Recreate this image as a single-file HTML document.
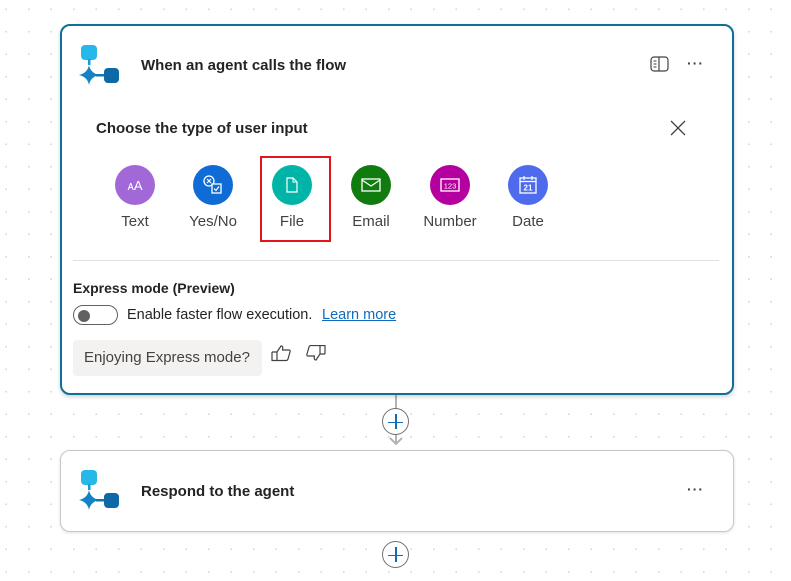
<!DOCTYPE html>
<html><head><style>
*{margin:0;padding:0;box-sizing:border-box}
body{width:791px;height:581px;overflow:hidden;position:relative;font-family:"Liberation Sans",sans-serif;color:#242424;
background-color:#fff;background-image:radial-gradient(circle,#d2d2d2 0.7px,transparent 1px);background-size:22.5px 22.5px;background-position:-5px -2px}
.card{position:absolute;left:60px;width:674px;background:#fff;border-radius:10px}
.c1{top:24px;height:371px;border:2px solid #0f6f94;box-shadow:0 2px 4px rgba(0,0,0,.18)}
.c2{top:450px;height:82px;border:1px solid #c8c8c8;box-shadow:0 1px 3px rgba(0,0,0,.12)}
.abs{position:absolute}
.title{font-size:15px;font-weight:bold;color:#242424}
.opt{position:absolute;top:165px;width:80px;text-align:center;font-size:15px;color:#424242}
.circ{width:40px;height:40px;border-radius:50%;margin:0 auto 8px;display:flex;align-items:center;justify-content:center}
.dots{position:absolute;font-size:14px;letter-spacing:1px;color:#424242;font-weight:bold}
.plus{position:absolute;width:27px;height:27px;border:1px solid #707070;border-radius:50%;background:#fff}
.plus:before{content:"";position:absolute;left:5px;top:12.5px;width:15px;height:1.5px;background:#0f6cbd}
.plus:after{content:"";position:absolute;left:12.3px;top:5px;width:1.5px;height:15px;background:#0f6cbd}
</style></head><body>
<div class="abs" style="left:395px;top:394px;width:2px;height:50px;background:#b3b3b3"></div>
<svg class="abs" style="left:389px;top:436px" width="14" height="10"><path d="M1 2 L7 8 L13 2" fill="none" stroke="#b3b3b3" stroke-width="2"/></svg>
<div class="plus" style="left:382px;top:408px"></div>
<div class="plus" style="left:382px;top:541px"></div>

<div class="card c1"></div>
<svg class="abs" style="left:78px;top:43px" width="44" height="44">
<rect x="3" y="2" width="16" height="15" rx="4" fill="#26b8e8"/>
<rect x="10" y="16" width="2.5" height="6" fill="#1c9ad6"/>
<path d="M11 22 Q12.5 30 21 32 Q12.5 34 11 42 Q9.5 34 1 32 Q9.5 30 11 22Z" fill="#1582c4"/>
<rect x="18" y="31" width="8" height="2.5" fill="#1276b8"/>
<rect x="26" y="25" width="15" height="15" rx="4" fill="#0d6aa6"/>
</svg>
<div class="abs title" style="left:141px;top:57px">When an agent calls the flow</div>
<svg class="abs" style="left:650px;top:56px" width="20" height="17"><rect x="1" y="1" width="17" height="14" rx="3" fill="none" stroke="#424242" stroke-width="1.2"/><line x1="9" y1="1" x2="9" y2="15" stroke="#424242" stroke-width="1.2"/><path d="M3.5 5h3M3.5 8h3M3.5 11h3" stroke="#424242"/></svg>
<div class="dots" style="left:687px;top:55px">···</div>
<div class="abs" style="left:96px;top:120px;font-size:15px;font-weight:bold;color:#242424">Choose the type of user input</div>
<svg class="abs" style="left:670px;top:120px" width="16" height="16"><path d="M1 1L15 15M15 1L1 15" stroke="#424242" stroke-width="1.3"/></svg>

<div class="opt" style="left:95px"><div class="circ" style="background:#a368d8"><span style="color:#fff;font-size:13px">ᴀA</span></div>Text</div>
<div class="opt" style="left:173px"><div class="circ" style="background:#0f6cd6"><svg width="22" height="22"><circle cx="7" cy="7" r="5" fill="none" stroke="#fff" stroke-width="1.3"/><path d="M5 5l4 4M9 5l-4 4" stroke="#fff" stroke-width="1.2"/><rect x="10" y="10" width="9" height="9" fill="#0f6cd6" stroke="#fff" stroke-width="1.3"/><path d="M12 14.5l2 2 3-4" fill="none" stroke="#fff" stroke-width="1.2"/></svg></div>Yes/No</div>
<div class="opt" style="left:252px"><div class="circ" style="background:#00b5a8"><svg width="14" height="16"><path d="M2 1h6l4 4v10H2Z" fill="none" stroke="#fff" stroke-width="1.2"/><path d="M8 1v4h4" fill="none" stroke="#fff" stroke-width="1"/></svg></div>File</div>
<div class="abs" style="left:260px;top:156px;width:71px;height:86px;border:2px solid #e3141b"></div>
<div class="opt" style="left:331px"><div class="circ" style="background:#107c10"><svg width="20" height="14"><rect x="1" y="1" width="18" height="12" fill="none" stroke="#fff" stroke-width="1.3"/><path d="M1 2l9 6 9-6" fill="none" stroke="#fff" stroke-width="1.2"/></svg></div>Email</div>
<div class="opt" style="left:410px"><div class="circ" style="background:#b4009e"><svg width="20" height="14"><rect x="1" y="1" width="18" height="12" fill="none" stroke="#fff" stroke-width="1.3"/><text x="10" y="10.5" font-size="7.5" fill="#fff" text-anchor="middle" font-family="Liberation Sans">123</text></svg></div>Number</div>
<div class="opt" style="left:488px"><div class="circ" style="background:#4f6bed"><svg width="20" height="20"><rect x="2" y="3" width="16" height="15" fill="none" stroke="#fff" stroke-width="1.3"/><line x1="2" y1="6.5" x2="18" y2="6.5" stroke="#fff" stroke-width="1.3"/><path d="M6 1v4M14 1v4" stroke="#fff" stroke-width="1.2"/><text x="10" y="15.5" font-size="8" font-weight="bold" fill="#fff" text-anchor="middle" font-family="Liberation Sans">21</text></svg></div>Date</div>

<div class="abs" style="left:73px;top:260px;width:646px;height:1px;background:#e0e0e0"></div>
<div class="abs" style="left:73px;top:280px;font-size:14px;font-weight:bold;color:#242424">Express mode (Preview)</div>
<div class="abs" style="left:73px;top:305px;width:45px;height:20px;border:1px solid #616161;border-radius:10px"><div style="position:absolute;left:4px;top:3.5px;width:12px;height:12px;border-radius:50%;background:#616161"></div></div>
<div class="abs" style="left:127px;top:307px;font-size:14.5px;color:#242424">Enable faster flow execution.</div>
<div class="abs" style="left:322px;top:307px;font-size:14.5px;color:#0f6cbd;text-decoration:underline">Learn more</div>
<div class="abs" style="left:73px;top:340px;width:189px;height:36px;background:#f3f2f1;border-radius:4px;font-size:15px;color:#424242;padding:9px 0 0 11px">Enjoying Express mode?</div>
<svg class="abs" style="left:270px;top:344px" width="22" height="18"><path d="M2 8h5l4-6c2 0 2 2 1.5 4H19c1 0 1.5 1 1 2l-2 7c-.3 1-1 1.5-2 1.5H7V8M2 8v8.5h5" fill="none" stroke="#424242" stroke-width="1.2" stroke-linejoin="round"/></svg>
<svg class="abs" style="left:305px;top:345px" width="22" height="18"><path d="M20 9h-5l-4 6c-2 0-2-2-1.5-4H3c-1 0-1.5-1-1-2l2-7c.3-1 1-1.5 2-1.5h9V9M20 9V.5h-5" fill="none" stroke="#424242" stroke-width="1.2" stroke-linejoin="round"/></svg>

<div class="card c2"></div>
<svg class="abs" style="left:78px;top:468px" width="44" height="44">
<rect x="3" y="2" width="16" height="15" rx="4" fill="#26b8e8"/>
<rect x="10" y="16" width="2.5" height="6" fill="#1c9ad6"/>
<path d="M11 22 Q12.5 30 21 32 Q12.5 34 11 42 Q9.5 34 1 32 Q9.5 30 11 22Z" fill="#1582c4"/>
<rect x="18" y="31" width="8" height="2.5" fill="#1276b8"/>
<rect x="26" y="25" width="15" height="15" rx="4" fill="#0d6aa6"/>
</svg>
<div class="abs title" style="left:141px;top:483px">Respond to the agent</div>
<div class="dots" style="left:687px;top:481px">···</div>
</body></html>
